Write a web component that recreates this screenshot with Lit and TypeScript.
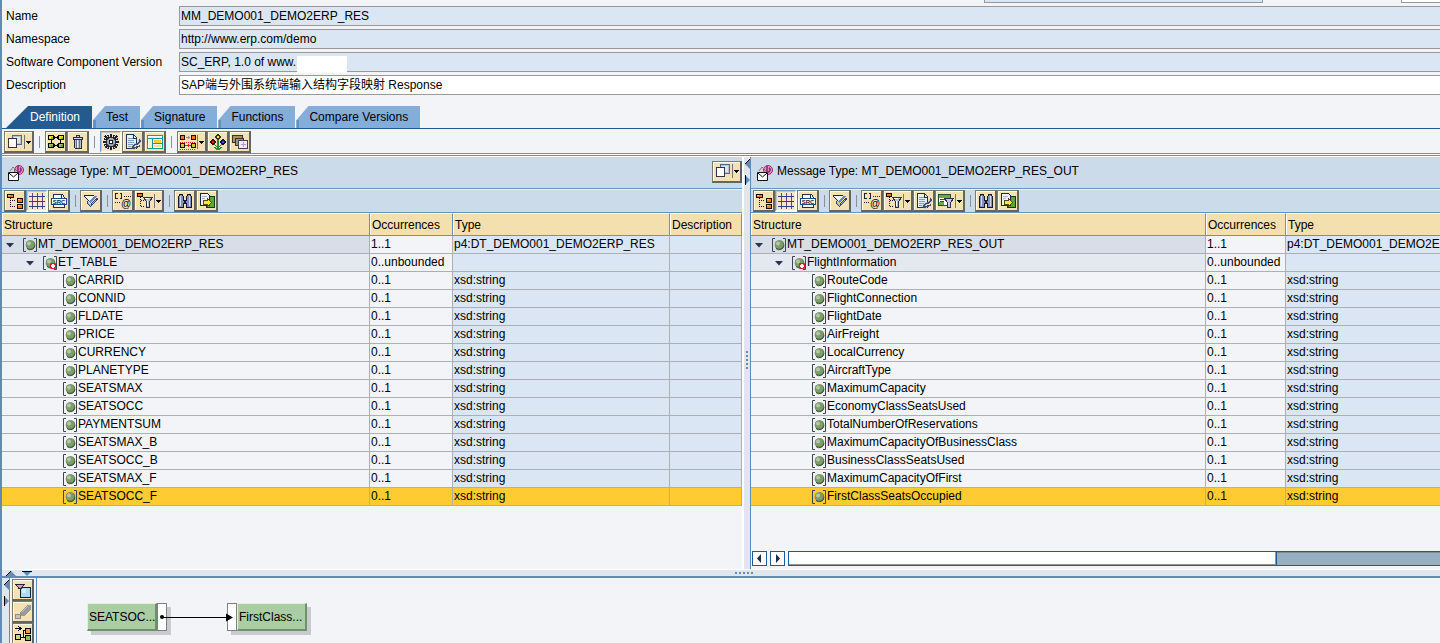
import { LitElement, html, svg, css, nothing } from "lit";
import { customElement, property } from "lit/decorators.js";
import { classMap } from "lit/directives/class-map.js";

const INK = "#1c2230";

/* 16 x 16 glyphs used on the tool buttons */
const glyphs: Record<string, unknown> = {
  windows: svg`
    <path d="M5.500 1.500h9v9h-9z" fill="#b9c4d8" stroke="#5c6684"/>
    <path d="M7 3h6v6H7z" fill="#dfe3ea"/>
    <path d="M1.500 4.500h8v9h-8z" fill="#fff" stroke="#30344a"/>`,
  grid4: svg`
    <path d="M.5 1.500h5v4h-5zM10.500 1.500h5v4h-5z" fill="#e8e23a" stroke="#000"/>
    <path d="M.5 9.500h5v4h-5zM10.500 9.500h5v4h-5z" fill="#9bbf5a" stroke="#000"/>
    <path d="M3 3h2v2H3zM13 3h2v2h-2z" fill="#b2b81e"/>
    <path d="M3 11h2v2H3zM13 11h2v2h-2z" fill="#6f9440"/>
    <path d="M6 3.500h4M6 11.500h4M3.500 6v3M12.500 6v3M6.500 2v3M9.500 2v3M6.500 10v3M9.500 10v3" stroke="#000"/>`,
  bin: svg`
    <path d="M4 5h8v9l-1 1H5l-1-1z" fill="#252a44"/>
    <path d="M5 6h6v8H5z" fill="#b7bfd2"/>
    <path d="M6.500 6v8M9.500 6v8" stroke="#6a7390"/>
    <path d="M7.500 6v8" stroke="#eef0f6"/>
    <path d="M3.500 3.500h9v2h-9z" fill="#d5dae6" stroke="#252a44"/>
    <path d="M6.500 1.500h3v2h-3z" fill="#d5dae6" stroke="#252a44"/>`,
  gear: svg`
    <path d="M7 0h2v16H7zM0 7h16v2H0z" fill="#1d1f26"/>
    <path d="M2 2l12 12M14 2L2 14M5 1l6 14M11 1L5 15M1 5l14 6M1 11l14-6" stroke="#1d1f26" stroke-width="1.500"/>
    <circle cx="8" cy="8" r="5" fill="#2e313a"/>
    <circle cx="8" cy="8" r="4" fill="#9ea5b6"/>
    <circle cx="8" cy="8" r="2.500" fill="#1d1f26"/>
    <path d="M7 7h2v2H7z" fill="#fff"/>`,
  doclink: svg`
    <path d="M1.500 .5h7l3 3v11h-10z" fill="#e6f0f6" stroke="#20354c"/>
    <path d="M3 4.500h5M3 6.500h6M3 8.500h6M3 10.500h5M3 12.500h5" stroke="#7f9cb0"/>
    <path d="M8.500 1v3h3" fill="none" stroke="#20354c"/>
    <path d="M14 5.500c2 1 1 3-1 4s-4 1-5 3 1 2 3 1" fill="none" stroke="#c3d0dc" stroke-width="3"/>
    <path d="M14 5.500c2 1 1 3-1 4s-4 1-5 3 1 2 3 1 3-1 4-2" fill="none" stroke="#3f5068" stroke-width="1.500"/>`,
  layout: svg`
    <path d="M.5 1.500h15v13H.5z" fill="#fff" stroke="#159a9c"/>
    <path d="M2 3h12v1H2zM2 6h3v7H2z" fill="#fbf3c4"/>
    <path d="M7 6h7v3H7z" fill="#f7d23c"/><path d="M7 11h7v2H7z" fill="#f7e27c"/>
    <path d="M1 4.500h14M5.500 5v9M6 9.500h9" stroke="#159a9c"/>`,
  mapping: svg`
    <path d="M0 8.500h16M0 15.500h16" stroke="#d8202a" stroke-dasharray="1 1"/>
    <path d="M.5 1.500h4v4h-4z" fill="#ef7c1c" stroke="#1a1200"/>
    <path d="M11.500 1.500h4v4h-4z" fill="#ef7c1c" stroke="#1a1200"/>
    <path d="M.5 9.500h4v4h-4z" fill="#c6cf3a" stroke="#1a1200"/>
    <path d="M11.500 9.500h4v4h-4z" fill="#c6cf3a" stroke="#1a1200"/>
    <path d="M6 3.500h4M8.500 2v3" stroke="#8a8f9a"/>
    <path d="M5 11.500h6M8.500 10v3" stroke="#d8202a"/>`,
  flower: svg`
    <path d="M8 6v10M8 14L4 10M8 14l4-4M4 13l4 3 4-3" fill="none" stroke="#2f8c2f" stroke-width="1.300"/>
    <path d="M8 .5L10.500 3 8 5.500 5.500 3z" fill="#f5e626" stroke="#3a3600"/>
    <path d="M3 5.500L5.500 8 3 10.500.5 8z" fill="#e22424" stroke="#4a0000"/>
    <path d="M13 5.500L15.500 8 13 10.500 10.500 8z" fill="#2f4fd8" stroke="#00104a"/>`,
  stack: svg`
    <path d="M.5 1.500h10v7H.5z" fill="#a98f6a" stroke="#3d3426"/>
    <path d="M3.500 4.500h8v7h-8z" fill="#8f9a86" stroke="#3d3426"/>
    <path d="M6.500 6.500h9v8h-9z" fill="#f0eaf2" stroke="#4a3f52"/>
    <path d="M11.500 8v5M9 10.500h5" stroke="#b59ac0"/>`,
  tree: svg`
    <path d="M3.500 5v9" stroke="#111" stroke-dasharray="1 1"/>
    <path d="M5 7.500h4M5 13.500h4" stroke="#111" stroke-dasharray="1 1"/>
    <path d="M.5 1.500h6v3h-6z" fill="#ef7c1c" stroke="#1a0a00"/>
    <path d="M10.500 5.500h5v4h-5zM10.500 11.500h5v4h-5z" fill="#ef7c1c" stroke="#1a0a00"/>
    <path d="M1 2h2v1H1zM11 6h2v1h-2zM11 12h2v1h-2z" fill="#ffc58c"/>`,
  hash: svg`
    <path d="M3.500 0v16M8.500 0v16M13.500 0v16" stroke="#6a3f7c"/>
    <path d="M0 3.500h16M0 8.500h16M0 13.500h16" stroke="#333a86"/>`,
  source: svg`
    <path d="M2.500 1.500h9l2 3v10h-11z" fill="#f4f8fc" stroke="#22304a"/>
    <path d="M10.500 2v3h3" fill="none" stroke="#22304a"/>
    <path d="M.5 5.500h15v6H.5z" fill="#fff" stroke="#1b4a86"/>
    <text x="8" y="11" text-anchor="middle" font-family="Liberation Sans, sans-serif" font-weight="bold" font-size="6" fill="#17203a">SRC</text>`,
  expand: svg`
    <path d="M1 2h10v1H1zM1 3h1v1H1zM2 4h1v1H2zM3 5h1v1H3zM4 6h1v1H4zM5 7h1v1H5z" fill="#1c2444"/>
    <path d="M2 3h9v1h-1v1H9v1H8v1H7v1H6V7H5V6H4V5H3V4H2z" fill="#f2f5fb"/>
    <path d="M6 8h1V7h1V6h1V5h1V4h1V3h3v1h-1v1h-1v1h-1v1h-1v1H9v1H8v1H7V9H6z" fill="#6d83bc"/>
    <path d="M4 8h1v1h1v1h1v1h1v-1h1V9h1V8h1V7h1V6h1V5h2v2h-1v1h-1v1h-1v1h-1v1h-1v1H9v1H8v1H7v-1H6v-1H5v-1H4z" fill="#35406c"/>
    <path d="M5 9h1v1h1v1h1v2H7v-1H6v-1H5zM9 10h1V9h1V8h1V7h1v1h-1v1h-1v1h-1v1H9z" fill="#a9b8e0"/>`,
  attrs: svg`
    <path d="M2.500 .5h-2v5h2M5 .5h1.500v5H5" fill="none" stroke="${INK}"/>
    <path d="M9 3.500h7M0 9.500h6" stroke="${INK}" stroke-dasharray="1 1"/>
    <text x="11" y="14" text-anchor="middle" font-family="Liberation Sans, sans-serif" font-size="10" fill="#000">@</text>`,
  filterTree: svg`
    <path d="M3.500 4v10" stroke="#111" stroke-dasharray="1 1"/>
    <path d="M4 7.500h3M4 13.500h3" stroke="#111" stroke-dasharray="1 1"/>
    <path d="M.5 .5h5v3h-5z" fill="#ef7c1c" stroke="#1a0a00"/>
    <path d="M6.500 4.500h9l-3 4v6h-3v-6z" fill="#b6c0d4" stroke="#2b3148"/>
    <path d="M8 5h4v1H8zM10 8h1v5h-1z" fill="#fff"/>`,
  filterDoc: svg`
    <path d="M.5 1.500h12v11H.5z" fill="#fff" stroke="#26502a"/>
    <path d="M1 2h11v3H1zM1 9h5v3H1z" fill="#6fa84c"/>
    <path d="M2 6.500h5M2 8.500h4" stroke="#444"/>
    <path d="M6.500 5.500h9l-3 4v5h-3v-5z" fill="#c4cbdc" stroke="#2b3148"/>`,
  find: svg`
    <path d="M1.500 4.500l1-3h3l1 3v3h3v-3l1-3h3l1 3v10h-5v-4h-3v4h-5z" fill="#8390bc" stroke="#12162e"/>
    <path d="M3 3h1v10H3zM12 3h1v10h-1z" fill="#d6dcf0"/>
    <path d="M7 8h2v2H7z" fill="#12162e"/>`,
  exportDoc: svg`
    <path d="M7.500 3.500h8v11h-8z" fill="#5aa63a" stroke="#123a0e"/>
    <path d="M1.500 .5h7l2 2v10h-9z" fill="#eef3fa" stroke="#1d2946"/>
    <path d="M3 3.500h5M3 5.500h3" stroke="#a9b6cc"/>
    <path d="M5 8h4V6h1v1h1v1h1v1h1v1h-1v1h-1v1h-1v1H9v-2H5z" fill="#ffe83a"/>
    <path d="M4.500 7.500h4v-2l4 4-4 4v-2h-4z" fill="none" stroke="#5a4a00"/>`,
  funnelBox: svg`
    <path d="M5.500 5.500h10v10h-10z" fill="#aadcfa" stroke="#16202c"/>
    <path d="M7 7h4v4H7z" fill="#cfeeff"/>
    <path d="M1 2.500h8l-3 4H4z" fill="#c9a6c8" stroke="#2b1f38"/>`,
  plug: svg`
    <path d="M.5 10.500h5v4h-5z" fill="#c8c2af" stroke="#8d8d88"/>
    <path d="M5 8l8-7h3v4l-7 7H6z" fill="#9a9a98"/>
    <path d="M7 8l6-6" stroke="#c4c4c0"/>`,
  flow: svg`
    <path d="M0 2.500h5M3 0l3 2.500L3 5M6 11.500h4M8.500 4v8M8 4.500h3" fill="none" stroke="#000"/>
    <path d="M.5 8.500h5v5h-5z" fill="#c8d87a" stroke="#000"/>
    <path d="M10.500 2.500h5v5h-5z" fill="#f2a23c" stroke="#000"/>
    <path d="M10.500 9.500h5v5h-5z" fill="#8fbf5c" stroke="#000"/>`,
};

const shared = css`
  * {
    box-sizing: border-box;
  }
  button {
    font: inherit;
    color: inherit;
    margin: 0;
    padding: 0;
    border: 0;
    background: none;
  }
  .bar {
    display: flex;
    align-items: center;
    padding-left: 2px;
    height: 22px;
  }
  .tool {
    display: flex;
    align-items: center;
    flex: none;
    height: 22px;
    padding-left: 1px;
    background: #f4e2b4;
    border: 1px solid #7a7a74;
    border-right: 2px solid #646460;
    border-bottom: 2px solid #646460;
    box-shadow: inset 1px 1px #fffbe4;
  }
  .tool svg {
    display: block;
    flex: none;
    shape-rendering: crispEdges;
  }
  .tool.on {
    background: #f3e6cc;
    border: 1px solid #7398c2;
    border-right: 2px solid #fffbe4;
    border-bottom: 2px solid #fffbe4;
    box-shadow: inset 1px 1px #c9c4c4;
  }
  .tool .glyph {
    margin: 0 1px;
  }
  .rule {
    flex: none;
    width: 1px;
    height: 12px;
    margin: 0 5px;
    background: #8d9096;
  }
`;

type Tool = { icon: string; label: string; menu?: boolean; on?: boolean } | "rule";

const toolButton = (t: Tool) =>
  t === "rule"
    ? html`<span class="rule"></span>`
    : html`<button type="button" class=${classMap({ tool: true, on: !!t.on })} aria-label=${t.label} aria-pressed=${t.on ? "true" : nothing}>
        <svg class="glyph" width="16" height="16" viewBox="0 0 16 16">${glyphs[t.icon]}</svg>
        ${t.menu
          ? html`<svg width="8" height="16" viewBox="0 0 8 16">
              <path d="M.5 1v14" stroke="#77776f" /><path d="M2 7h5L4.500 10z" fill="#000" />
            </svg>`
          : nothing}
      </button>`;

interface Row {
  name: string;
  level: number;
  occurs: string;
  type: string;
}

const treeRows = (root: string, rootType: string, group: string, leaves: string[]): Row[] => [
  { name: root, level: 0, occurs: "1..1", type: rootType },
  { name: group, level: 1, occurs: "0..unbounded", type: "" },
  ...leaves.map((name) => ({ name, level: 2, occurs: "0..1", type: "xsd:string" })),
];

@customElement("structure-pane")
export class StructurePane extends LitElement {
  @property() heading = "";
  @property({ attribute: false }) tools: Tool[] = [];
  @property({ attribute: false }) rows: Row[] = [];
  @property({ attribute: false }) cornerTool?: Tool;
  @property({ type: Boolean, reflect: true }) wide = false;

  static styles = [
    shared,
    css`
      :host {
        display: flex;
        flex-direction: column;
        min-width: 0;
        overflow: hidden;
      }
      .title {
        display: flex;
        align-items: center;
        height: 31px;
        padding-left: 6px;
        background: #ccdbe9;
      }
      .title h2 {
        flex: 1;
        margin: 0 0 0 4px;
        font-size: 12px;
        font-weight: normal;
        line-height: 16px;
        padding-bottom: 4px;
        white-space: nowrap;
      }
      .title .tool {
        margin-bottom: 2px;
      }
      .strip {
        background: #ccdbe9;
        border-top: 1px solid #6a92ba;
        border-bottom: 1px solid #6a92ba;
        box-shadow: inset 0 1px #eef4fa;
        padding-top: 1px;
      }
      .strip .rule {
        margin-right: 4px;
      }
      .scroller {
        flex: 1;
        min-height: 0;
        overflow: hidden;
      }
      table {
        width: 100%;
        table-layout: fixed;
        border-collapse: separate;
        border-spacing: 0;
      }
      :host([wide]) table {
        width: 134%;
      }
      .c-occurs {
        width: 83px;
      }
      .c-type {
        width: 217px;
      }
      .c-desc {
        width: 72px;
      }
      :host([wide]) .c-name {
        width: 455px;
      }
      :host([wide]) .c-occurs {
        width: 80px;
      }
      :host([wide]) .c-type {
        width: auto;
      }
      th {
        height: 23px;
        padding: 0 2px;
        background: #f4e0ae;
        border-top: 1px solid #fff;
        border-right: 1px solid #6a92ba;
        border-bottom: 1px solid #6a92ba;
        box-shadow: inset 1px 0 #fff;
        font-weight: normal;
        text-align: left;
        white-space: nowrap;
      }
      td {
        height: 18px;
        padding: 0 1px;
        line-height: 17px;
        background: #dae6f3;
        border-right: 1px solid #adafb3;
        border-bottom: 1px solid #adafb3;
        white-space: nowrap;
        overflow: hidden;
      }
      .occurs,
      .l2 .name {
        background: #f3f4f8;
      }
      .l0 .name {
        background: #d8dee8;
      }
      .l1 .name {
        background: #e4e8f0;
      }
      .chosen td,
      .chosen .name {
        background: #ffcb33;
      }
      .node {
        display: flex;
        align-items: center;
        height: 17px;
        padding-left: 3px;
      }
      .l1 .node {
        padding-left: 23px;
      }
      .l2 .node {
        padding-left: 43px;
      }
      .toggle {
        width: 17px;
        flex: none;
        height: 10px;
      }
      .toggle svg,
      .node svg {
        display: block;
        flex: none;
      }
      .slider {
        display: flex;
        flex: none;
        gap: 3px;
        margin: 0 0 3px 1px;
        height: 15px;
      }
      .step {
        width: 15px;
        height: 15px;
        border: 1px solid #235b91;
        background: #fff;
        display: grid;
        place-items: center;
      }
      .track {
        flex: 1;
        display: flex;
        border: 1px solid #235b91;
        border-right: 0;
        background: #96b0c2;
        box-shadow: inset 0 1px #7f8790;
      }
      .thumb {
        width: 75%;
        background: #fff;
        border-right: 1px solid #235b91;
        box-shadow: inset -1px -1px #8f959c;
      }
    `,
  ];

  private bullet(row: Row) {
    return html`<svg width="15" height="14" viewBox="0 0 15 14">
      <path d="M3 .5H.5v13H3M11 .5h2.500v13H11" fill="none" stroke="#3c4258" />
      <circle cx="7.500" cy="7" r="4.800" fill="#5e7f4d" />
      <circle cx="7" cy="6.500" r="4" fill="#7f9c6d" />
      <circle cx="6" cy="5.500" r="2" fill="#b4c8a6" />
      <path d="M4 10.500a4.800 4.800 0 0 0 8-3" fill="none" stroke="#3c5632" />
      ${row.level === 1
        ? svg`<rect x="7" y="7" width="6" height="6" rx="1" fill="#d8202a"/><path d="M9 8h2v4H9zM8 9h4v2H8z" fill="#fff"/>`
        : nothing}
    </svg>`;
  }

  render() {
    const last = this.rows.length - 1;
    return html`
      <div class="title">
        <svg width="16" height="16" viewBox="0 0 16 16">
          <circle cx="11" cy="5" r="4.500" fill="#f08cb0" stroke="#a02858" />
          <path d="M10 1v6M12 3c2 1 1 4-1 4" fill="none" stroke="#6a2a9c" stroke-width="1.500" />
          <path d="M2 6l3-4 4 4" fill="none" stroke="#777" />
          <path d="M.5 7.500h10v8H.5z" fill="#fff" stroke="#111" />
          <path d="M1 8l4.500 4L10 8" fill="none" stroke="#111" />
        </svg>
        <h2>${this.heading}</h2>
        ${this.cornerTool ? toolButton(this.cornerTool) : nothing}
      </div>
      <div class="strip"><div class="bar">${this.tools.map(toolButton)}</div></div>
      <div class="scroller">
        <table>
          <colgroup>
            <col class="c-name" /><col class="c-occurs" /><col class="c-type" />
            ${this.wide ? nothing : html`<col class="c-desc" />`}
          </colgroup>
          <thead>
            <tr>
              <th>Structure</th>
              <th>Occurrences</th>
              <th>Type</th>
              ${this.wide ? nothing : html`<th>Description</th>`}
            </tr>
          </thead>
          <tbody>
            ${this.rows.map(
              (r, i) => html`<tr class=${classMap({ ["l" + r.level]: true, chosen: i === last })}>
                <td class="name">
                  <div class="node">
                    ${r.level < 2
                      ? html`<button type="button" class="toggle" aria-label="Collapse ${r.name}" aria-expanded="true">
                          <svg width="10" height="10" viewBox="0 0 10 10"><path d="M0 3h8L4 7.500z" fill="#2c3350" /></svg>
                        </button>`
                      : html`<span class="toggle"></span>`}
                    ${this.bullet(r)}<span>${r.name}</span>
                  </div>
                </td>
                <td class="occurs">${r.occurs}</td>
                <td>${r.type}</td>
                ${this.wide ? nothing : html`<td></td>`}
              </tr>`
            )}
          </tbody>
        </table>
      </div>
      ${this.wide
        ? html`<div class="slider">
            <button type="button" class="step" aria-label="Scroll left">
              <svg width="9" height="11" viewBox="0 0 9 11"><path d="M6 1v9L2 5.500z" fill="#1f2a4c" /></svg>
            </button>
            <button type="button" class="step" aria-label="Scroll right">
              <svg width="9" height="11" viewBox="0 0 9 11"><path d="M3 1v9l4-4.500z" fill="#1f2a4c" /></svg>
            </button>
            <div class="track"><div class="thumb"></div></div>
          </div>`
        : nothing}
    `;
  }
}

const tabs = ["Definition", "Test", "Signature", "Functions", "Compare Versions"];

const fields = [
  { id: "name", label: "Name", value: "MM_DEMO001_DEMO2ERP_RES", locked: true },
  { id: "namespace", label: "Namespace", value: "http://www.erp.com/demo", locked: true },
  { id: "version", label: "Software Component Version", value: "SC_ERP, 1.0 of www.", locked: true },
  { id: "description", label: "Description", value: "SAP端与外围系统端输入结构字段映射 Response", locked: false },
];

const mainTools: Tool[] = [
  { icon: "windows", label: "Windows", menu: true },
  "rule",
  { icon: "grid4", label: "Dependencies" },
  { icon: "bin", label: "Delete mapping" },
  "rule",
  { icon: "gear", label: "Settings", on: true },
  { icon: "doclink", label: "Linked documents" },
  { icon: "layout", label: "Layout" },
  "rule",
  { icon: "mapping", label: "Mapping templates", menu: true },
  { icon: "flower", label: "Data flow" },
  { icon: "stack", label: "Copies" },
];

const viewTools: Tool[] = [
  { icon: "tree", label: "Tree" },
  { icon: "hash", label: "Grid", on: true },
  { icon: "source", label: "Source" },
  "rule",
  { icon: "expand", label: "Expand all" },
  "rule",
  { icon: "attrs", label: "Attributes" },
  { icon: "filterTree", label: "Filter", menu: true },
];

const findTools: Tool[] = ["rule", { icon: "find", label: "Find" }, { icon: "exportDoc", label: "Export" }];

const sourceRows = treeRows("MT_DEMO001_DEMO2ERP_RES", "p4:DT_DEMO001_DEMO2ERP_RES", "ET_TABLE", [
  "CARRID", "CONNID", "FLDATE", "PRICE", "CURRENCY", "PLANETYPE", "SEATSMAX",
  "SEATSOCC", "PAYMENTSUM", "SEATSMAX_B", "SEATSOCC_B", "SEATSMAX_F", "SEATSOCC_F",
]);

const targetRows = treeRows("MT_DEMO001_DEMO2ERP_RES_OUT", "p4:DT_DEMO001_DEMO2ERP_RES_OUT", "FlightInformation", [
  "RouteCode", "FlightConnection", "FlightDate", "AirFreight", "LocalCurrency",
  "AircraftType", "MaximumCapacity", "EconomyClassSeatsUsed", "TotalNumberOfReservations",
  "MaximumCapacityOfBusinessClass", "BusinessClassSeatsUsed", "MaximumCapacityOfFirst",
  "FirstClassSeatsOccupied",
]);

@customElement("app-root")
export class AppRoot extends LitElement {
  static styles = [
    shared,
    css`
      :host {
        display: flex;
        flex-direction: column;
        height: 100vh;
        overflow: hidden;
        border-left: 2px solid #638ab5;
        background: #f3f4f8;
        color: #000;
        font: 12px/16px "Liberation Sans", "Noto Sans CJK SC", Arial, sans-serif;
      }
      .above {
        display: grid;
        grid-template-columns: 279px 39px;
        justify-content: end;
        column-gap: 138px;
        height: 3px;
        margin-bottom: 3px;
      }
      .above span {
        border: 1px solid #999;
        border-top: 0;
        background: #dae6f3;
      }
      .above .open {
        border-right: 0;
        background: #fff;
      }
      .form {
        display: grid;
        grid-template-columns: 173px 1fr;
        row-gap: 3px;
        padding-left: 4px;
      }
      .form label {
        line-height: 20px;
      }
      .field {
        position: relative;
      }
      .field input {
        display: block;
        width: 100%;
        height: 20px;
        padding: 0 1px 3px;
        border: 1px solid #999;
        border-right: 0;
        border-radius: 0;
        background: #fff;
        color: #000;
        font: inherit;
        outline: 0;
      }
      .field .locked {
        padding-bottom: 0;
        background: #dae6f3;
      }
      .mask {
        position: absolute;
        left: 118px;
        top: 4px;
        width: 50px;
        height: 17px;
        background: #fff;
      }
      .tabs {
        display: flex;
        gap: 1px;
        padding: 11px 0 0 4px;
        border-bottom: 1px solid #235b91;
      }
      .tab {
        height: 22px;
        padding: 0 12px 0 13px;
        line-height: 22px;
        background: linear-gradient(#6492c0, #6492c0) 0 100% / 3px 8px no-repeat, #84add9;
        clip-path: polygon(0 14px, 12px 0, 100% 0, 100% 100%, 0 100%);
        white-space: nowrap;
      }
      .tab.open {
        padding-left: 24px;
        background: #235b91;
        color: #fff;
        clip-path: polygon(22px 0, 100% 0, 100% 100%, 0 100%);
      }
      .main {
        flex: none;
        height: 27px;
        padding-top: 2px;
        border-bottom: 1px solid #6a92ba;
        box-shadow: inset 0 -1px #fff, inset 0 -2px #6a92ba;
      }
      .work {
        flex: 1;
        min-height: 0;
        display: grid;
        grid-template-columns: minmax(0, 740fr) 9px minmax(0, 689fr);
        border-top: 1px solid #fff;
      }
      .divider {
        position: relative;
        display: flex;
        flex-direction: column;
        align-items: flex-end;
        background: #dfe6ed;
        border-left: 2px solid #fff;
        border-right: 1px solid #638ab5;
      }
      .arrow {
        display: block;
        height: 10px;
        margin-top: 2px;
      }
      .arrow + .arrow {
        margin-top: 6px;
      }
      .arrow svg,
      .fold svg {
        display: block;
      }
      .grip {
        position: absolute;
        left: 2px;
        top: 47%;
      }
      .fold {
        position: relative;
        flex: none;
        display: flex;
        gap: 6px;
        height: 9px;
        padding: 1px 0 0 4px;
        background: #dfe6ed;
        border-top: 1px solid #fff;
        border-bottom: 2px solid #638ab5;
      }
      .grip-across {
        position: absolute;
        left: 51%;
        top: 2px;
      }
      .flow {
        flex: none;
        display: flex;
        height: 65px;
        overflow: hidden;
      }
      .edge {
        width: 8px;
        background: #dfe6ed;
        border-right: 1px solid #638ab5;
      }
      .side {
        display: flex;
        flex-direction: column;
        padding: 1px 2px 0;
        background: #f3f4f8;
        border-right: 1px solid #638ab5;
      }
      .canvas {
        position: relative;
        flex: 1;
      }
      .brick {
        position: absolute;
        top: 25px;
        display: flex;
        height: 28px;
        box-shadow: 4px 4px #c9cacd;
      }
      .source {
        left: 50px;
      }
      .target {
        left: 190px;
      }
      .text {
        width: 70px;
        padding-left: 1px;
        line-height: 26px;
        background: #aacda3;
        border: 1px solid #e4f2dc;
        border-right: 2px solid #6f9069;
        border-bottom: 2px solid #6f9069;
        white-space: nowrap;
      }
      .port {
        width: 10px;
        background: #fff;
        border: 1px solid #808080;
      }
      .wire {
        position: absolute;
        left: 122px;
        top: 34px;
      }
    `,
  ];

  render() {
    return html`
      <div class="above"><span></span><span class="open"></span></div>
      <form class="form">
        ${fields.map(
          (f) => html`<label for=${f.id}>${f.label}</label>
            <div class="field">
              <input id=${f.id} type="text" class=${classMap({ locked: f.locked })} .value=${f.value} ?readonly=${f.locked} />
              ${f.id === "version" ? html`<span class="mask"></span>` : nothing}
            </div>`
        )}
      </form>
      <div class="tabs" role="tablist">
        ${tabs.map(
          (t, i) => html`<button type="button" role="tab" aria-selected=${i === 0 ? "true" : "false"} class=${classMap({ tab: true, open: i === 0 })}>${t}</button>`
        )}
      </div>
      <div class="main"><div class="bar">${mainTools.map(toolButton)}</div></div>
      <div class="work">
        <structure-pane
          heading="Message Type: MT_DEMO001_DEMO2ERP_RES"
          .tools=${[...viewTools, ...findTools]}
          .rows=${sourceRows}
          .cornerTool=${{ icon: "windows", label: "Pane windows", menu: true } as Tool}
        ></structure-pane>
        <div class="divider">
          <button type="button" class="arrow" aria-label="Collapse source">
            <svg width="5" height="10" viewBox="0 0 5 10"><path d="M5 0v10L0 5z" fill="#638ab5" /><path d="M5 0L0 5" stroke="#000" /></svg>
          </button>
          <button type="button" class="arrow" aria-label="Collapse target">
            <svg width="5" height="10" viewBox="0 0 5 10"><path d="M0 0v10l5-5z" fill="#638ab5" /><path d="M.5 0v10" stroke="#000" /></svg>
          </button>
          <svg class="grip" width="3" height="19" viewBox="0 0 3 19"><path d="M1 0v19" stroke="#638ab5" stroke-width="2" stroke-dasharray="2 2" /></svg>
        </div>
        <structure-pane
          wide
          heading="Message Type: MT_DEMO001_DEMO2ERP_RES_OUT"
          .tools=${[
            ...viewTools,
            { icon: "doclink", label: "Linked documents" },
            { icon: "filterDoc", label: "Filter target", menu: true },
            ...findTools,
          ] as Tool[]}
          .rows=${targetRows}
        ></structure-pane>
      </div>
      <div class="fold">
        <button type="button" aria-label="Show flow">
          <svg width="10" height="5" viewBox="0 0 10 5"><path d="M0 5h10L5 0z" fill="#638ab5" /><path d="M0 5l5-5" stroke="#000" /></svg>
        </button>
        <button type="button" aria-label="Hide flow">
          <svg width="10" height="5" viewBox="0 0 10 5"><path d="M0 0h10L5 5z" fill="#638ab5" /><path d="M0 .5h10" stroke="#000" /></svg>
        </button>
        <svg class="grip-across" width="19" height="3" viewBox="0 0 19 3"><path d="M0 1h19" stroke="#638ab5" stroke-width="2" stroke-dasharray="2 2" /></svg>
      </div>
      <div class="flow">
        <div class="edge">
          <button type="button" class="arrow" aria-label="Hide flow tools">
            <svg width="7" height="10" viewBox="0 0 7 10"><path d="M7 0v10L2 5z" fill="#638ab5" /><path d="M7 0L2 5" stroke="#000" /></svg>
          </button>
          <button type="button" class="arrow" aria-label="Show flow tools">
            <svg width="7" height="10" viewBox="0 0 7 10"><path d="M2 0v10l5-5z" fill="#638ab5" /><path d="M2.500 0v10" stroke="#000" /></svg>
          </button>
        </div>
        <div class="side">
          ${[
            { icon: "funnelBox", label: "Filter flow" },
            { icon: "plug", label: "Connect" },
            { icon: "flow", label: "Arrange" },
          ].map(toolButton)}
        </div>
        <div class="canvas">
          <div class="brick source"><span class="text">SEATSOC...</span><span class="port"></span></div>
          <div class="brick target"><span class="port"></span><span class="text">FirstClass...</span></div>
          <svg class="wire" width="76" height="10" viewBox="0 0 76 10">
            <circle cx="3" cy="5" r="2" fill="#000" />
            <path d="M3 5.500h66" stroke="#000" />
            <path d="M67 1.500v8l7-4z" fill="#000" />
          </svg>
        </div>
      </div>
    `;
  }
}
